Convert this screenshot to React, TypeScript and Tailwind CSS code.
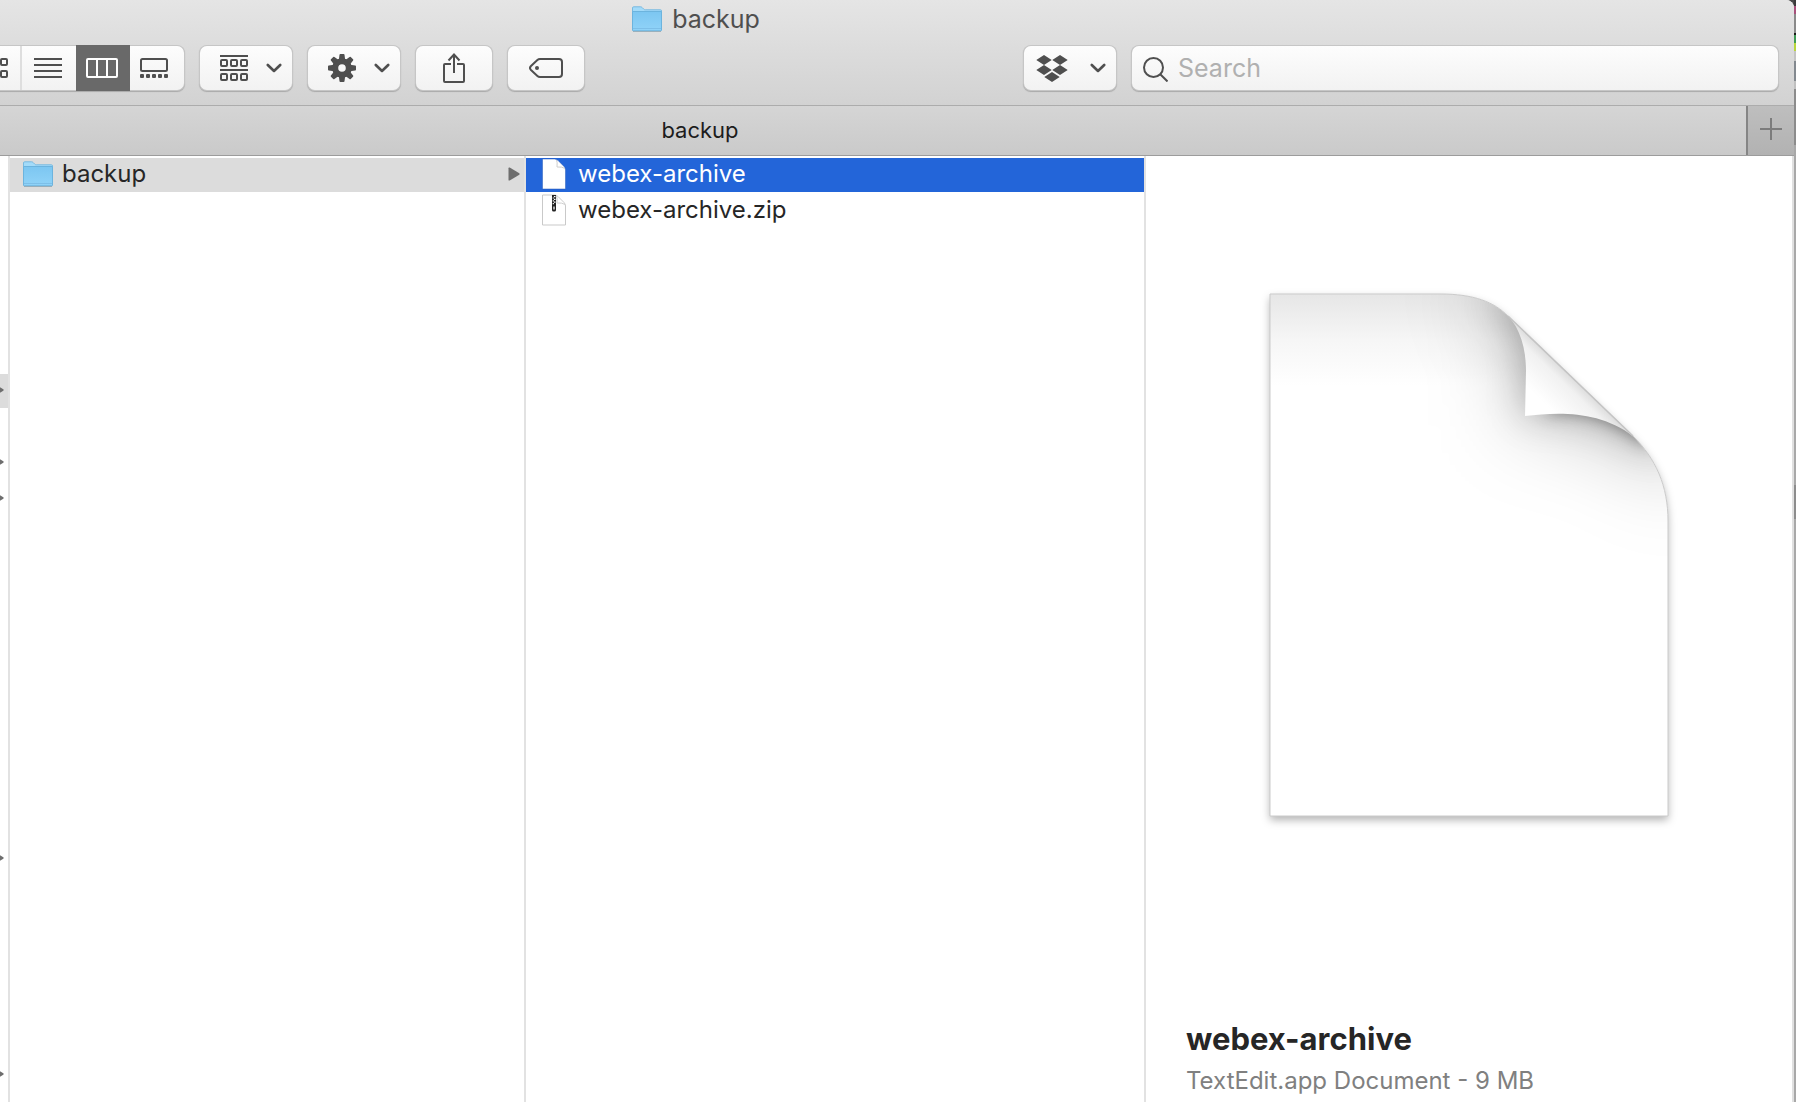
import type { ReactNode } from "react";

const RAISED =
  "flex h-11 shrink-0 items-center rounded-[7px] bg-linear-to-b from-[#fdfdfd] to-[#f2f2f2] shadow-[0_0_0_1px_#c6c6c6,0_1px_1px_1px_#a9a9a9]";

function Folder() {
  return (
    <svg width="30" height="26" viewBox="0 0 30 26" className="shrink-0" aria-hidden="true">
      <defs>
        <linearGradient id="folderFront" x1="0" y1="0" x2="0" y2="1">
          <stop offset="0" stopColor="#7cc6f1" />
          <stop offset="1" stopColor="#90d3f8" />
        </linearGradient>
      </defs>
      <path d="M1 25.5h28" stroke="#000" strokeOpacity=".22" />
      <path d="M.5 24V2Q.5.8 1.7.8H8.600q.8 0 1.400.6l1.800 1.800q.6.600 1.400.6H28.500q1 0 1 1V24Z" fill="#a3dbf9" stroke="#79b9df" />
      <path d="M.5 5.500h29V24q0 .8-.8.8H1.300q-.8 0-.8-.8Z" fill="url(#folderFront)" stroke="#6cb4de" />
      <path d="M1 22.500h28" stroke="#7dbfe8" />
    </svg>
  );
}

function Chevron() {
  return (
    <svg width="16" height="10" viewBox="0 0 16 10" fill="none" stroke="#4f4f4f" strokeWidth="2.600" strokeLinecap="round" strokeLinejoin="round" aria-hidden="true">
      <path d="M1.800 2 8 8l6.200-6" />
    </svg>
  );
}

function ListIcon() {
  return (
    <svg width="28" height="20" viewBox="0 0 28 20" stroke="#4f4f4f" strokeWidth="2" aria-hidden="true">
      <path d="M0 1h28M0 7h28M0 13h28M0 19h28" />
    </svg>
  );
}

function ColumnsIcon() {
  return (
    <svg width="32" height="20" viewBox="0 0 32 20" fill="none" stroke="#fff" strokeWidth="2" aria-hidden="true">
      <rect x="1" y="1" width="30" height="18" rx="1" />
      <path d="M11 1v18M21 1v18" />
    </svg>
  );
}

function GalleryIcon() {
  return (
    <svg width="28" height="20" viewBox="0 0 28 20" aria-hidden="true">
      <rect x="1" y="1" width="26" height="12" rx="1.500" fill="none" stroke="#4f4f4f" strokeWidth="2" />
      {[0, 6, 12, 18, 24].map((x) => (
        <rect key={x} x={x} y="16" width="4" height="4" rx="1" fill="#4f4f4f" />
      ))}
    </svg>
  );
}

function GridEdgeIcon() {
  return (
    <svg width="8" height="20" viewBox="0 0 8 20" fill="none" stroke="#4f4f4f" strokeWidth="2" aria-hidden="true">
      <rect x="1" y="1" width="6" height="6" rx="1" />
      <rect x="1" y="13" width="6" height="6" rx="1" />
    </svg>
  );
}

function GroupIcon() {
  return (
    <svg width="28" height="26" viewBox="0 0 28 26" fill="none" stroke="#4f4f4f" strokeWidth="2" aria-hidden="true">
      <path d="M0 1h28M0 15h28" />
      {[1, 11, 21].map((x) => (
        <g key={x}>
          <rect x={x} y="5" width="6" height="6" rx="1" />
          <rect x={x} y="19" width="6" height="6" rx="1" />
        </g>
      ))}
    </svg>
  );
}

function GearIcon() {
  return (
    <svg width="28" height="28" viewBox="-14 -14 28 28" aria-hidden="true">
      <circle r="6.800" fill="none" stroke="#4f4f4f" strokeWidth="6" />
      {[0, 45, 90, 135, 180, 225, 270, 315].map((a) => (
        <path key={a} d="M-3.200-8 -2.500-13.200Q-2.400-14-1.600-14H1.600Q2.400-14 2.500-13.200L3.200-8Z" fill="#4f4f4f" transform={`rotate(${a})`} />
      ))}
    </svg>
  );
}

function ShareIcon() {
  return (
    <svg width="22" height="30" viewBox="0 0 22 30" fill="none" stroke="#4f4f4f" strokeWidth="2" aria-hidden="true">
      <path d="M8 11H2q-1 0-1 1v16q0 1 1 1h18q1 0 1-1V12q0-1-1-1h-6M11 20V2" />
      <path d="m5.500 7.500 5.500-6 5.500 6" />
    </svg>
  );
}

function TagIcon() {
  return (
    <svg width="34" height="20" viewBox="0 0 34 20" aria-hidden="true">
      <path d="M11 1H30q3 0 3 3v12q0 3-3 3H11q-1.500 0-2.600-1L2 12q-2-2 0-4L8.400 2Q9.500 1 11 1Z" fill="none" stroke="#4f4f4f" strokeWidth="2" />
      <circle cx="8" cy="10" r="2" fill="#4f4f4f" />
    </svg>
  );
}

function DropboxIcon() {
  return (
    <svg width="32" height="27" viewBox="0 0 32 27" fill="#4f4f4f" aria-hidden="true">
      <path d="m8 0 7.700 5L8 10 .3 5ZM24 0l7.700 5L24 10l-7.700-5ZM8 10l7.700 5L8 20 .3 15ZM24 10l7.700 5L24 20l-7.700-5ZM16 17l7.700 5-7.700 5-7.700-5Z" />
    </svg>
  );
}

function SearchIcon() {
  return (
    <svg width="25" height="25" viewBox="0 0 25 25" fill="none" stroke="#4f4f4f" strokeWidth="2" className="shrink-0" aria-hidden="true">
      <circle cx="10.500" cy="10.500" r="9.500" />
      <path d="m17 17 7.500 7.500" />
    </svg>
  );
}

function Arrow() {
  return (
    <svg width="12" height="14" viewBox="0 0 12 14" className="shrink-0" aria-hidden="true">
      <path d="M.5 1.300Q.5 0 1.700.6L11.300 6.300Q12 7 11.300 7.700L1.700 13.400Q.5 14 .5 12.700Z" fill="#6e6e6e" />
    </svg>
  );
}

function PageIcon({ zip = false }: { zip?: boolean }) {
  return (
    <svg width="24" height="32" viewBox="0 0 24 32" className="shrink-0" aria-hidden="true">
      <path d="M.5 1H12.500Q14.500 1 16 2.500L22 8.500Q23.500 10 23.500 12V31H.5Z" fill="#fff" stroke={zip ? "#c9c9c9" : "#2459b8"} strokeOpacity={zip ? 1 : 0.5} />
      <path d="M14.500 2Q15.500 4 15 9q5-.5 8 1.500" fill="#fff" stroke="#cfcfcf" />
      {zip && (
        <g>
          <path d="M10 1h4v15q0 1.500-1.500 1.500h-1Q10 17.500 10 16Z" fill="#222" />
          <path d="M12.700 2v8" stroke="#fff" strokeWidth="1.600" strokeDasharray="1.200 1.600" />
          <path d="M11.300 3.400v8" stroke="#fff" strokeWidth="1.200" strokeDasharray="1.200 1.600" />
          <path d="M12 12.500v3" stroke="#e5e5e5" strokeWidth="1.400" />
        </g>
      )}
    </svg>
  );
}

function DocumentPreview() {
  const page = "M16 13H186C220 13 240 21 254 35L379 155C402 178 414 205 414 240V535H16Z";
  const curl = "M254 35C266 47 272 68 272 90L271 135C303 131 345 129 379 155Z";
  return (
    <svg width="430" height="560" viewBox="0 0 430 560" role="img" aria-label="Document preview">
      <defs>
        <clipPath id="pageClip">
          <path d={page} />
        </clipPath>
        <linearGradient id="topShade" x1="0" y1="13" x2="0" y2="105" gradientUnits="userSpaceOnUse">
          <stop offset="0" stopColor="#e6e6e6" />
          <stop offset=".5" stopColor="#f6f6f6" />
          <stop offset="1" stopColor="#fff" />
        </linearGradient>
        <linearGradient id="curlShade" x1="316" y1="95" x2="290" y2="122" gradientUnits="userSpaceOnUse">
          <stop offset="0" stopColor="#dedede" />
          <stop offset=".25" stopColor="#f1f1f1" />
          <stop offset="1" stopColor="#fff" />
        </linearGradient>
        <filter id="wide" x="-100%" y="-100%" width="300%" height="300%">
          <feGaussianBlur stdDeviation="42" />
        </filter>
        <filter id="mid" x="-100%" y="-100%" width="300%" height="300%">
          <feGaussianBlur stdDeviation="18" />
        </filter>
        <filter id="near" x="-100%" y="-100%" width="300%" height="300%">
          <feGaussianBlur stdDeviation="7" />
        </filter>
        <filter id="drop" x="-10%" y="-10%" width="120%" height="120%">
          <feDropShadow dx="0" dy="4" stdDeviation="4" floodColor="#000" floodOpacity=".3" />
        </filter>
      </defs>
      <path d={page} fill="#fff" filter="url(#drop)" />
      <g clipPath="url(#pageClip)">
        <path d={page} fill="url(#topShade)" />
        <path d="M215 0C255 47 262 68 262 90L261 145C303 141 345 139 430 210L460 100L300-20Z" fill="#000" fillOpacity=".2" filter="url(#wide)" />
        <path d="M240 15C266 47 272 68 272 90L271 135C303 131 345 129 400 170L440 120L300-10Z" fill="#000" fillOpacity=".25" filter="url(#mid)" />
        <path d="M330 100 290 134C325 130 352 134 392 166L400 130Z" fill="#000" fillOpacity=".3" filter="url(#near)" />
      </g>
      <path d={page} fill="none" stroke="#cbcbcb" />
      <path d={curl} fill="url(#curlShade)" />
      <path d="M254 35 379 155" stroke="#c4c4c4" strokeWidth="1.500" />
    </svg>
  );
}

function Segment({ label, active = false, children }: { label: string; active?: boolean; children: ReactNode }) {
  return (
    <button
      type="button"
      aria-label={label}
      aria-pressed={active}
      className={
        active
          ? "flex h-[46px] w-[54px] items-center bg-[#696969] pl-[10px]"
          : "flex h-11 w-[54px] items-center pl-3 last:pl-[10px]"
      }
    >
      {children}
    </button>
  );
}

const ANCESTOR_ROWS = Array.from({ length: 26 }, (_, i) => ({
  id: i,
  arrow: [6, 8, 9, 19, 25].includes(i),
  selected: i === 6,
}));

export default function App() {
  return (
    <div className="flex h-screen overflow-hidden bg-[#4a4a4a] font-['Inter',sans-serif]">
      <main className="flex min-w-0 flex-1 flex-col overflow-hidden rounded-tr-[8px] bg-white">
        <header className="flex h-[106px] shrink-0 flex-col border-b border-[#acacac] bg-linear-to-b from-[#e5e5e5] to-[#d2d2d2]">
          <div className="flex h-[46px] items-start justify-center pt-1 pr-[402px]">
            <div className="flex items-center gap-[10px]">
              <Folder />
              <h1 className="text-[25px] leading-[30px] text-[#4f4f4f]">backup</h1>
            </div>
          </div>
          <div className="flex items-center gap-4 pr-4">
            <div className={RAISED + " rounded-l-none"} role="group" aria-label="View">
              <button type="button" aria-label="Icons" className="flex h-11 w-[22px] items-center border-r-2 border-[#dedede]">
                <GridEdgeIcon />
              </button>
              <Segment label="List"><ListIcon /></Segment>
              <Segment label="Columns" active><ColumnsIcon /></Segment>
              <Segment label="Gallery"><GalleryIcon /></Segment>
            </div>
            <button type="button" aria-label="Group by" className={RAISED + " w-[92px] justify-between pr-[10px] pl-5"}>
              <GroupIcon />
              <Chevron />
            </button>
            <button type="button" aria-label="Actions" className={RAISED + " w-[92px] justify-between pr-[10px] pl-5"}>
              <GearIcon />
              <Chevron />
            </button>
            <button type="button" aria-label="Share" className={RAISED + " w-[76px] justify-center"}>
              <ShareIcon />
            </button>
            <button type="button" aria-label="Edit tags" className={RAISED + " w-[76px] justify-center"}>
              <TagIcon />
            </button>
            <button type="button" aria-label="Dropbox" className={RAISED + " ml-auto w-[92px] justify-between pr-[10px] pl-3"}>
              <DropboxIcon />
              <Chevron />
            </button>
            <label className={RAISED + " w-[646px] gap-[10px] pt-[2px] pl-[11px]"}>
              <SearchIcon />
              <input type="search" aria-label="Search" placeholder="Search" className="min-w-0 flex-1 bg-transparent text-[25px] text-[#4f4f4f] outline-none placeholder:text-[#b0b0b0]" />
            </label>
          </div>
        </header>

        <nav className="flex h-[50px] shrink-0 border-b border-[#9c9c9c] bg-linear-to-b from-[#d5d5d5] to-[#cacaca]" aria-label="Tabs">
          <button type="button" className="flex-1 pr-[346px] text-[22px] text-[#1c1c1c]">backup</button>
          <button type="button" aria-label="New tab" className="flex w-12 items-center justify-center border-l-2 border-[#858585] bg-linear-to-b from-[#bebebe] to-[#b2b2b2] pb-1">
            <svg width="22" height="22" viewBox="0 0 22 22" stroke="#7c7c7c" strokeWidth="2" aria-hidden="true">
              <path d="M11 0v22M0 11h22" />
            </svg>
          </button>
        </nav>

        <div className="flex min-h-0 flex-1 text-2xl text-[#262626]">
          <ul className="flex w-[10px] shrink-0 flex-col gap-[2px] overflow-hidden border-r-2 border-[#e2e2e2] pt-[2px]">
            {ANCESTOR_ROWS.map((row) => (
              <li key={row.id} className={row.selected ? "flex h-[34px] shrink-0 items-center justify-end bg-[#dcdcdc] pr-1 pb-[2px]" : "flex h-[34px] shrink-0 items-center justify-end pr-1 pb-[2px]"}>
                {row.arrow && <Arrow />}
              </li>
            ))}
          </ul>
          <ul className="w-[516px] shrink-0 border-r-2 border-[#e2e2e2] pt-[2px]">
            <li>
              <button type="button" className="flex h-[34px] w-full items-center bg-[#dcdcdc] pr-1 pb-[2px] pl-[13px] text-left">
                <Folder />
                <span className="ml-[9px] flex-1">backup</span>
                <Arrow />
              </button>
            </li>
          </ul>
          <ul className="flex w-[620px] shrink-0 flex-col gap-[2px] border-r-2 border-[#e2e2e2] pt-[2px]">
            <li>
              <button type="button" className="flex h-[34px] w-full items-center gap-3 bg-[#2365d9] pb-[2px] pl-4 text-left text-white">
                <PageIcon />
                webex-archive
              </button>
            </li>
            <li>
              <button type="button" className="flex h-[34px] w-full items-center gap-3 pb-[2px] pl-4 text-left">
                <PageIcon zip />
                webex-archive.zip
              </button>
            </li>
          </ul>
          <section className="flex min-w-0 flex-1 flex-col justify-between overflow-hidden border-r-2 border-[#e0e0e0] pt-[125px] pb-[3px]">
            <div className="flex justify-center">
              <DocumentPreview />
            </div>
            <div className="px-10">
              <h2 className="text-[31px] leading-10 font-bold">webex-archive</h2>
              <p className="mt-1 text-2xl leading-9 text-[#808080]">TextEdit.app Document - 9 MB</p>
            </div>
          </section>
        </div>
      </main>
      <div className="flex w-[2px] shrink-0 flex-col bg-[#a8a8a8]" aria-hidden="true">
        <div className="h-[6px] bg-[#3a3a3a]" />
        <div className="h-2 bg-[#a8517c]" />
        <div className="h-[19px] bg-[#8a8a8a]" />
        <div className="h-[2px] bg-[#1a1a1a]" />
        <div className="h-2 bg-[#3f9a55]" />
        <div className="h-2 bg-[#b9d63c]" />
        <div className="h-[10px] bg-[#c4c4c4]" />
        <div className="h-5 bg-[#83898f]" />
        <div className="h-2 bg-[#c0c0c0]" />
        <div className="h-14 bg-[#8c8c8c]" />
        <div className="mt-[340px] h-[34px] bg-[#8c8c8c]" />
      </div>
    </div>
  );
}
